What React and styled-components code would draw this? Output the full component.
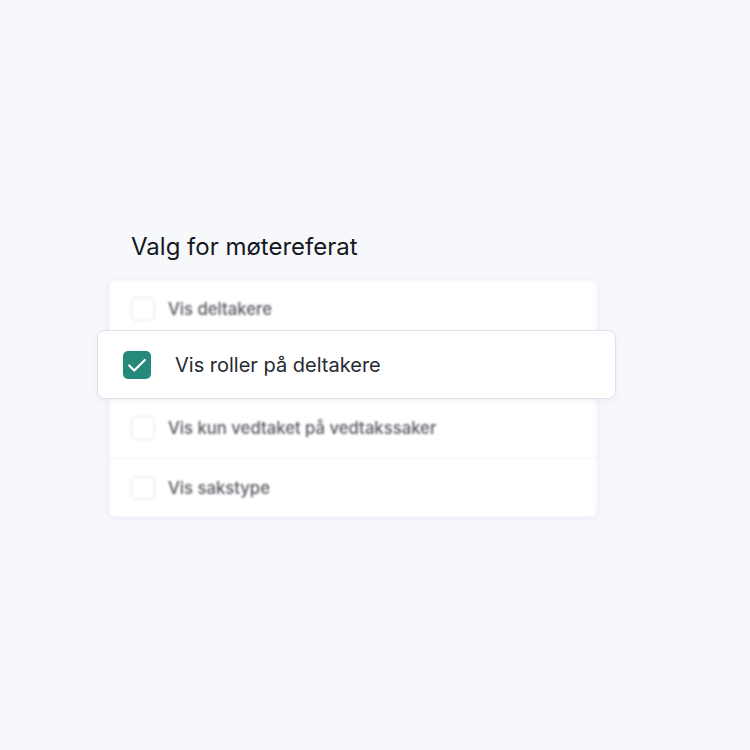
import React from "react";
import styled, { createGlobalStyle } from "styled-components";

const GlobalStyle = createGlobalStyle`
  html, body {
    margin: 0;
    padding: 0;
    background: #f7f8fc;
    font-family: Inter, "Noto Sans", sans-serif;
  }
`;

const Page = styled.div`
  width: 750px;
  height: 750px;
  box-sizing: border-box;
  padding: 229px 0 0 108px;
`;

const Title = styled.h2`
  margin: 0 0 14px 23px;
  font-size: 24px;
  font-weight: 400;
  color: #16181d;
  line-height: 36px;
`;

const Stack = styled.div`
  position: relative;
  width: 490px;
`;

const Card = styled.div`
  background: #ffffff;
  border: 1px solid #e6e9ef;
  border-radius: 7px;
  box-shadow: 0 1px 3px rgba(30, 40, 60, 0.06);
  filter: blur(0.8px);
`;

const Row = styled.div`
  display: flex;
  align-items: center;
  gap: 13px;
  height: 58.5px;
  padding: 0 22px;
  border-top: ${(p) => (p.$first ? "none" : "1px solid #e9ecf1")};
  font-size: 16.7px;
  font-weight: 500;
  color: #55585f;
`;

const Box = styled.span`
  width: 22px;
  height: 22px;
  border: 1px solid #e3e6ec;
  border-radius: 5px;
  background: #fff;
  flex-shrink: 0;
`;

const Popped = styled.div`
  position: absolute;
  top: 51px;
  left: -11px;
  right: -18px;
  height: 69px;
  display: flex;
  align-items: center;
  gap: 24px;
  padding: 0 25px;
  box-sizing: border-box;
  background: #ffffff;
  border: 1px solid #dde3ec;
  border-radius: 8px;
  box-shadow: 0 2px 6px rgba(30, 40, 60, 0.05);
  font-size: 20px;
  color: #262a33;
`;

const CheckBox = styled.span`
  width: 28px;
  height: 28px;
  border-radius: 5px;
  background: #268a7b;
  display: flex;
  align-items: center;
  justify-content: center;
  flex-shrink: 0;
`;

const options = [
  "Vis deltakere",
  "",
  "Vis kun vedtaket på vedtakssaker",
  "Vis sakstype",
];

export default function App() {
  return (
    <Page>
      <GlobalStyle />
      <Title>Valg for møtereferat</Title>
      <Stack>
        <Card>
          {options.map((label, i) => (
            <Row key={i} $first={i === 0}>
              {label && <Box />}
              {label}
            </Row>
          ))}
        </Card>
        <Popped>
          <CheckBox>
            <svg width="22" height="22" viewBox="0 0 24 24" fill="none" stroke="#fff" strokeWidth="2.4" strokeLinecap="round" strokeLinejoin="round">
              <path d="M3.5 12.5l5.5 5.5L20.5 6.5" />
            </svg>
          </CheckBox>
          Vis roller på deltakere
        </Popped>
      </Stack>
    </Page>
  );
}
